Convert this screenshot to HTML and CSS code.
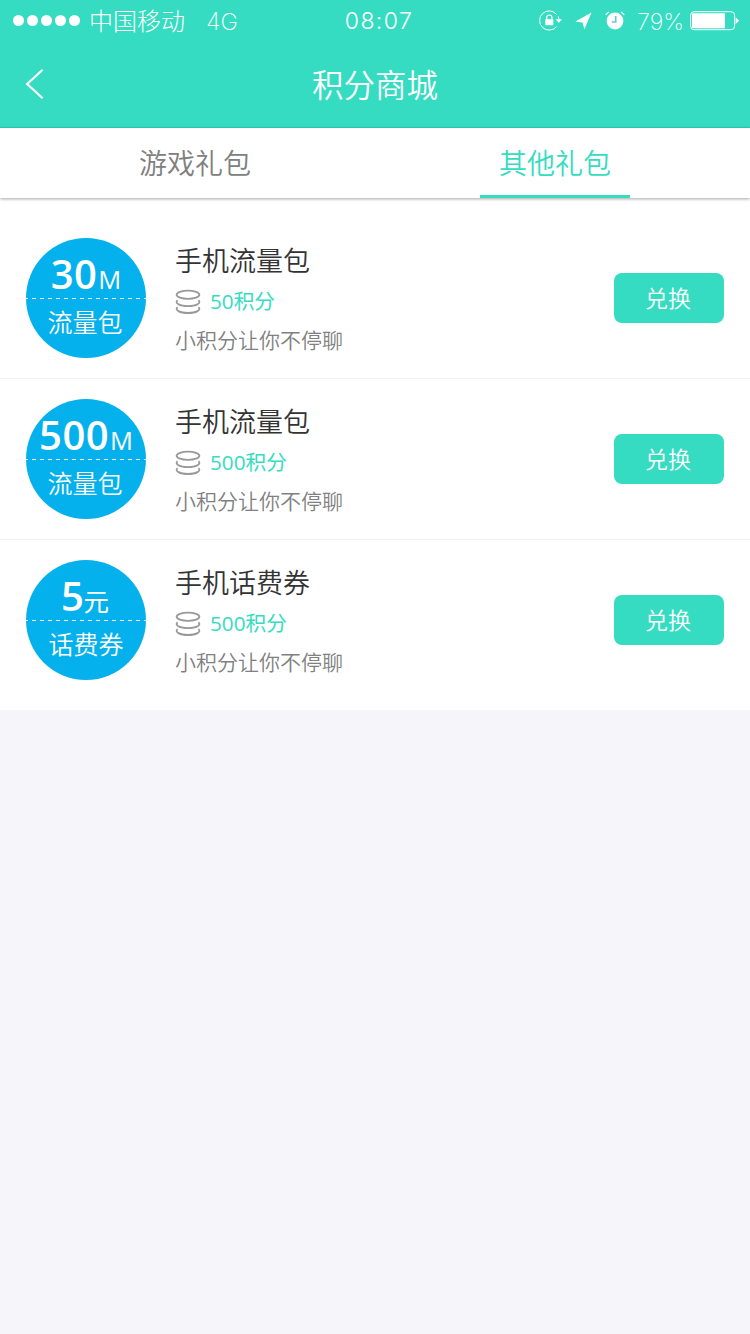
FILE: index.html
```
<!DOCTYPE html>
<html lang="zh-CN">
<head>
<meta charset="utf-8">
<title>积分商城</title>
<link rel="stylesheet" href="styles.css">
</head>
<body>
<svg class="defs" width="0" height="0" aria-hidden="true">
  <symbol id="coins" viewBox="0 0 26 26">
    <g fill="none" stroke="#999" stroke-width="1.8">
      <ellipse cx="13" cy="5.8" rx="11.4" ry="4.1"/>
      <path d="M2.6 11.3A11.4 4.2 0 1 0 23.4 11.3"/>
      <path d="M2.6 18.1A11.4 4.2 0 1 0 23.4 18.1"/>
    </g>
  </symbol>
</svg>
<header class="header">
  <div class="status">
    <div class="status-left">
      <span class="signal"><i></i><i></i><i></i><i></i><i></i></span>
      <span class="carrier">中国移动</span>
      <span class="network">4G</span>
    </div>
    <span class="clock">08:07</span>
    <div class="status-right">
      <svg class="icon-lock" width="24" height="22" viewBox="0 0 24 22" fill="none" stroke="#fff">
        <path d="M17.6 4.4A9.6 9.6 0 1 0 17.6 16.6M19.2 6.4l.9 2.8"/>
        <path d="M16.6 9.2h6.4l-3.2 3.6z" fill="#fff" stroke="none"/>
        <path d="M7.7 10V7.6a2.6 2.6 0 0 1 5.2 0V10" stroke-width="1.2"/>
        <path d="M6.3 9.2h8v6h-8z" fill="#fff" stroke="none"/>
      </svg>
      <svg class="icon-arrow" width="17" height="18" viewBox="0 0 17 18"><path d="M16.5.5L9.4 17.5 7.6 10.6.3 9.6z" fill="#fff"/></svg>
      <svg class="icon-alarm" width="20" height="20" viewBox="0 0 20 20" fill="none" stroke="#fff">
        <path d="M.7 3.8L4 .9M16 .9l3.3 2.9" stroke-width="1.2"/>
        <circle cx="10" cy="10" r="8.4" fill="#fff" stroke="none"/>
        <path d="M10.7 5v6H6.8" stroke="#72bfe2" stroke-width="1.7"/>
      </svg>
      <span class="percent">79%</span>
      <svg class="icon-battery" width="49" height="20" viewBox="0 0 49 20">
        <rect x=".6" y=".7" width="44" height="18" rx="3.5" fill="none" stroke="#fff"/>
        <rect x="2" y="2.2" width="33" height="15" rx="1" fill="#fff"/>
        <path d="M45.6 6.2l3.4 3.5-3.4 3.5z" fill="#fff"/>
      </svg>
    </div>
  </div>
  <div class="nav">
    <svg class="back" width="20" height="32" viewBox="0 0 20 32"><path d="M17.6 1.8L2.2 16l15.4 14.2" fill="none" stroke="#fff" stroke-width="2.2"/></svg>
    <h1 class="title">积分商城</h1>
  </div>
</header>
<nav class="tabs">
  <a class="tab">游戏礼包</a>
  <a class="tab tab-active">其他礼包</a>
</nav>
<main class="list">
  <section class="row">
    <div class="badge">
      <div class="amount"><b>30</b><span class="unit">M</span></div>
      <svg class="dash" width="120" height="1"><path d="M-2 .5h124" stroke="#fff" stroke-dasharray="4 4"/></svg>
      <div class="kind">流量包</div>
    </div>
    <div class="info">
      <h2 class="name">手机流量包</h2>
      <div class="points"><svg width="26" height="26"><use href="#coins"/></svg><span>50积分</span></div>
      <p class="desc">小积分让你不停聊</p>
    </div>
    <button class="exchange">兑换</button>
  </section>
  <section class="row">
    <div class="badge">
      <div class="amount"><b>500</b><span class="unit">M</span></div>
      <svg class="dash" width="120" height="1"><path d="M-2 .5h124" stroke="#fff" stroke-dasharray="4 4"/></svg>
      <div class="kind">流量包</div>
    </div>
    <div class="info">
      <h2 class="name">手机流量包</h2>
      <div class="points"><svg width="26" height="26"><use href="#coins"/></svg><span>500积分</span></div>
      <p class="desc">小积分让你不停聊</p>
    </div>
    <button class="exchange">兑换</button>
  </section>
  <section class="row">
    <div class="badge">
      <div class="amount"><b>5</b><span class="unit unit-yuan">元</span></div>
      <svg class="dash" width="120" height="1"><path d="M-2 .5h124" stroke="#fff" stroke-dasharray="4 4"/></svg>
      <div class="kind">话费券</div>
    </div>
    <div class="info">
      <h2 class="name">手机话费券</h2>
      <div class="points"><svg width="26" height="26"><use href="#coins"/></svg><span>500积分</span></div>
      <p class="desc">小积分让你不停聊</p>
    </div>
    <button class="exchange">兑换</button>
  </section>
</main>
</body>
</html>
```
FILE: styles.css
```
* { box-sizing: border-box; margin: 0; padding: 0; }
body {
  width: 750px;
  min-height: 1334px;
  background: #f5f5fa;
  font-family: "Open Sans", "Noto Sans CJK SC", sans-serif;
  font-weight: 350;
  color: #333;
}
svg { display: block; flex: none; }
.defs { position: absolute; }
.header { height: 128px; background: #35dcc1; border-bottom: 1px solid #30d0b6; color: #fff; }
.status {
  display: grid;
  grid-template-columns: 1fr auto 1fr;
  align-items: center;
  height: 40px;
  padding: 0 11px 0 13px;
  font-family: Inter, "Noto Sans CJK SC", sans-serif;
  font-weight: 200;
  font-size: 23px;
  line-height: 40px;
}
.status-left, .status-right, .signal { display: flex; align-items: center; }
.status-right { justify-content: flex-end; }
.signal { gap: 3px; margin-bottom: 1px; }
.signal i { width: 11px; height: 11px; border-radius: 50%; background: #fff; }
.carrier { margin-left: 9px; padding-top: 2px; font-size: 24px; }
.network { margin-left: 21px; padding-top: 1px; font-size: 23.5px; }
.clock { padding: 0 0 0 6px; font-weight: 300; font-size: 23px; letter-spacing: 1.4px; }
.icon-arrow { margin-left: 12px; margin-bottom: 1px; }
.icon-alarm { margin-left: 13px; margin-bottom: 1px; }
.percent { margin-left: 12px; padding-top: 1px; font-size: 23.3px; }
.icon-battery { margin-left: 6px; }
.nav {
  display: grid;
  grid-template-columns: 1fr auto 1fr;
  align-items: center;
  height: 88px;
  padding: 0 25px;
}
.title { font-weight: 350; font-size: 31.5px; line-height: 44px; padding-top: 1px; }
.tabs {
  position: relative;
  display: flex;
  justify-content: space-between;
  height: 70px;
  padding: 0 120px;
  background: #fff;
  box-shadow: 0 1px 3px rgba(0, 0, 0, .35);
}
.tab { width: 150px; text-align: center; font-size: 28px; line-height: 70px; color: #808080; }
.tab-active { color: #35dcc1; border-bottom: 3px solid #35dcc1; }
.list { padding: 20px 0 10px; background: #fff; }
.row { display: flex; align-items: flex-start; height: 161px; padding: 20px 26px; border-bottom: 1px solid #f2f2f2; }
.row:last-child { height: 160px; border-bottom: 0; }
.badge { width: 120px; height: 120px; border-radius: 50%; overflow: hidden; background: #05b1ed; color: #fff; text-align: center; }
.amount { height: 60px; padding-top: 9px; line-height: 54px; white-space: nowrap; }
.amount b { font-size: 40px; font-weight: 600; line-height: 54px; letter-spacing: .4px; }
.unit { margin-left: 1px; font-size: 25.5px; font-weight: 400; }
.unit-yuan { margin-left: -1px; margin-right: 2px; }
.kind { margin-left: -2px; font-size: 25px; line-height: 46px; }
.row:last-child .kind { margin-left: 0; }
.info { flex: 1; margin-left: 29px; }
.name { font-size: 27px; font-weight: 350; line-height: 46px; }
.points { display: flex; align-items: center; gap: 9px; height: 36px; font-size: 20.7px; font-weight: 400; line-height: 32px; color: #35dcc1; }
.points span { padding-bottom: 2px; }
.desc { font-size: 21px; line-height: 40px; color: #808080; }
.exchange {
  width: 110px;
  height: 50px;
  margin-top: 35px;
  padding-right: 2px;
  border: 0;
  border-radius: 8px;
  background: #35dcc1;
  color: #fff;
  font: 350 23px/50px "Open Sans", "Noto Sans CJK SC", sans-serif;
}
```
